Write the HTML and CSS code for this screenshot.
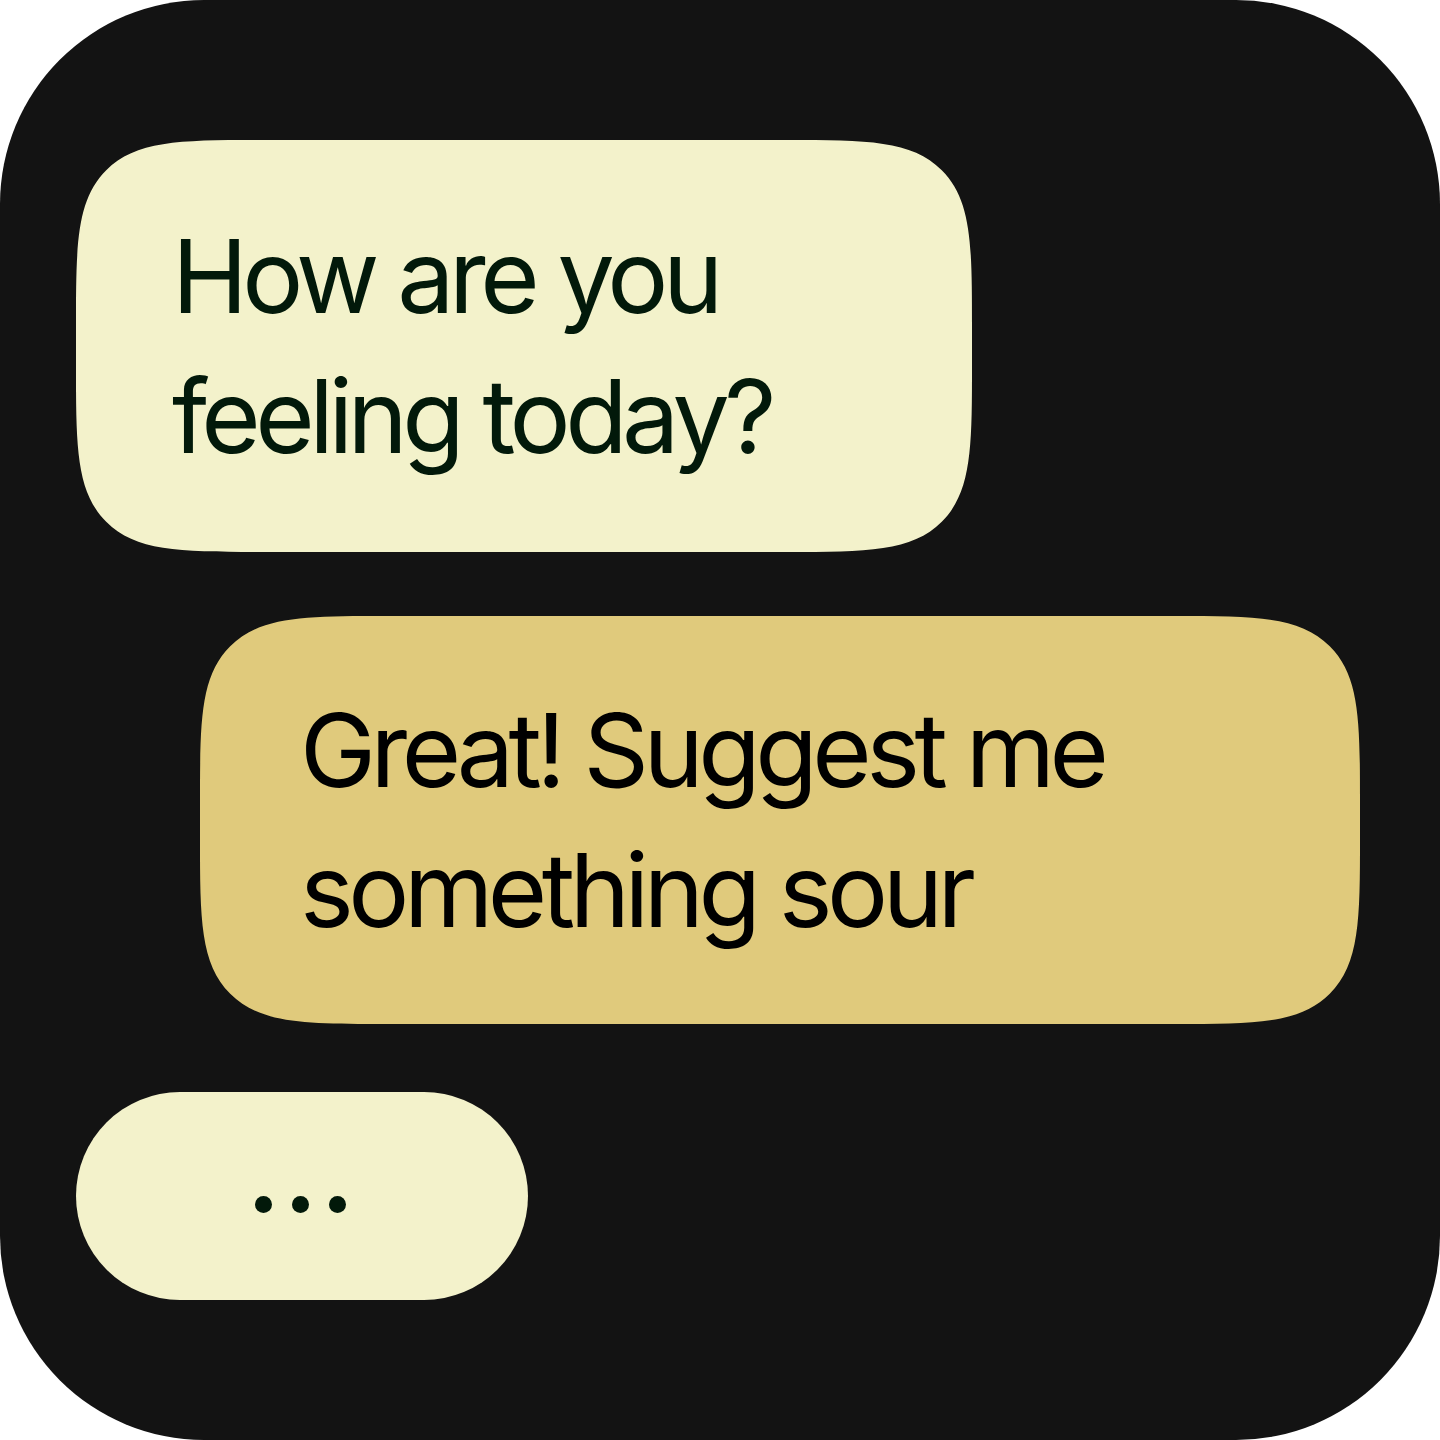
FILE: index.html
```html
<!DOCTYPE html>
<html lang="en">
<head>
<meta charset="utf-8">
<title>Chat</title>
<link rel="stylesheet" href="styles.css">
</head>
<body>
<main class="frame">
  <div class="bubble bubble-in">
    <p class="msg">How are you<br>feeling today?</p>
  </div>
  <div class="bubble bubble-out">
    <p class="msg">Great! Suggest me<br>something sour</p>
  </div>
  <div class="bubble bubble-typing" aria-label="typing">
    <span class="dot"></span><span class="dot"></span><span class="dot"></span>
  </div>
</main>
</body>
</html>
```

FILE: styles.css
```css
* { box-sizing: border-box; }
html, body { margin: 0; padding: 0; background: #ffffff; }
.frame {
  width: 1440px;
  height: 1440px;
  background: #131313;
  border-radius: 204px;
  display: flex;
  flex-direction: column;
  align-items: flex-start;
  padding: 140px 80px 0 76px;
  font-family: Inter, "Noto Sans", sans-serif;
}
.bubble {
  display: flex;
  align-items: center;
  border-radius: 130px;
}
.msg {
  margin: 0;
  font-size: 102px;
  line-height: 140px;
  letter-spacing: -5.5px;
}
.bubble-in {
  width: 896px;
  height: 412px;
  background: #f3f2cb;
  color: #02190a;
  padding-left: 96px;
}
.bubble-out {
  align-self: flex-end;
  width: 1160px;
  height: 408px;
  margin-top: 64px;
  background: #e0ca7c;
  color: #000000;
  padding-left: 100px;
}
.bubble-typing {
  width: 452px;
  height: 208px;
  margin-top: 68px;
  background: #f3f2cb;
  border-radius: 104px;
  justify-content: center;
  gap: 20px;
  padding-top: 16px;
  padding-right: 4px;
}
.dot {
  width: 17px;
  height: 17px;
  border-radius: 50%;
  background: #02190a;
}
@supports (corner-shape: squircle) {
  .bubble-in, .bubble-out { border-radius: 190px; corner-shape: squircle; }
}
```
